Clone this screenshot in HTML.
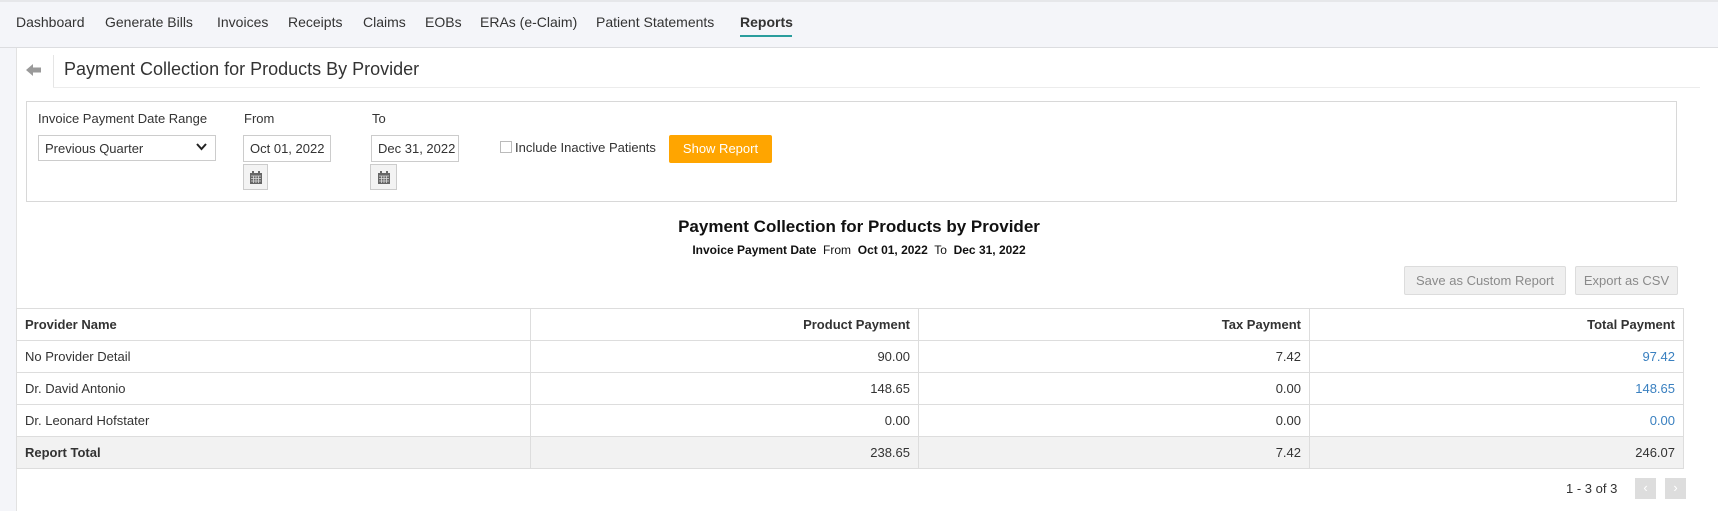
<!DOCTYPE html>
<html><head><meta charset="utf-8"><style>
*{box-sizing:border-box;margin:0;padding:0}
body{width:1718px;height:511px;overflow:hidden;background:#f4f5f9;font-family:"Liberation Sans",Arial,sans-serif;color:#333;position:relative}
.abs{position:absolute}
.nav{left:0;top:0;width:1718px;height:48px;border-top:2px solid #e6e7ea;border-bottom:1px solid #dcdde0;background:#f4f5f9}
.nav span{position:absolute;top:12px;font-size:14px;color:#333}
.panel{left:16px;top:48px;width:1702px;height:463px;background:#fff;border-left:1px solid #e2e2e2}
.inp{border:1px solid #ccc;background:#fff;font-size:13px;color:#333;padding-left:6px;line-height:25px}
.cal{border:1px solid #ccc;background:#f3f3f3}
table{border-collapse:collapse;position:absolute;left:16px;top:308px;width:1668px;font-size:13px}
td{border:1px solid #ddd;height:32px;padding:0 8px;text-align:right}
td:first-child{text-align:left}
tr.h td{font-weight:bold}
tr.t td{background:#f2f2f2}
tr.t td:first-child{font-weight:bold}
.lnk{color:#3a80c0}
.btn{background:#efefef;border:1px solid #dcdcdc;color:#8a8a8a;font-size:13px;text-align:center;line-height:27px;border-radius:2px}
</style></head><body>
<div class="abs nav">
<span style="left:16px">Dashboard</span>
<span style="left:105px">Generate Bills</span>
<span style="left:217px">Invoices</span>
<span style="left:288px">Receipts</span>
<span style="left:363px">Claims</span>
<span style="left:425px">EOBs</span>
<span style="left:480px">ERAs (e-Claim)</span>
<span style="left:596px">Patient Statements</span>
<span style="left:740px;font-weight:bold">Reports</span>
<div class="abs" style="left:740px;top:33px;width:52px;height:2px;background:#2a9d9d"></div>
</div>
<div class="abs panel"></div>
<svg class="abs" style="left:26px;top:63px" width="16" height="14" viewBox="0 0 16 14"><path d="M0 7 L7 1 L7 4.5 L15 4.5 L15 9.5 L7 9.5 L7 13 Z" fill="#9a9a9a"/></svg>
<div class="abs" style="left:53px;top:55px;width:1px;height:33px;background:#e5e5e5"></div>
<div class="abs" style="left:64px;top:59px;font-size:18px;color:#333">Payment Collection for Products By Provider</div>
<div class="abs" style="left:53px;top:87px;width:1647px;height:1px;background:#ececec"></div>
<div class="abs" style="left:26px;top:101px;width:1651px;height:101px;border:1px solid #d8d8d8"></div>
<div class="abs" style="left:38px;top:111px;font-size:13px">Invoice Payment Date Range</div>
<div class="abs" style="left:244px;top:111px;font-size:13px">From</div>
<div class="abs" style="left:372px;top:111px;font-size:13px">To</div>
<div class="abs inp" style="left:38px;top:135px;width:178px;height:26px">Previous Quarter</div>
<svg class="abs" style="left:196px;top:143px" width="11" height="8" viewBox="0 0 11 8"><path d="M1 1 L5.5 6 L10 1" stroke="#222" stroke-width="2" fill="none"/></svg>
<div class="abs inp" style="left:243px;top:135px;width:88px;height:27px">Oct 01, 2022</div>
<div class="abs inp" style="left:371px;top:135px;width:88px;height:27px">Dec 31, 2022</div>
<div class="abs cal" style="left:243px;top:164px;width:25px;height:26px"><svg style="position:absolute;left:6px;top:6px" width="12" height="13" viewBox="0 0 12 13"><rect x="0" y="2" width="12" height="11" fill="#666"/><rect x="2" y="0" width="2" height="3" fill="#666"/><rect x="8" y="0" width="2" height="3" fill="#666"/><path d="M1 5h10M1 7.5h10M1 10h10M3.5 5v7M6 5v7M8.5 5v7" stroke="#ddd" stroke-width=".8"/></svg></div>
<div class="abs cal" style="left:370px;top:164px;width:27px;height:26px"><svg style="position:absolute;left:7px;top:6px" width="12" height="13" viewBox="0 0 12 13"><rect x="0" y="2" width="12" height="11" fill="#666"/><rect x="2" y="0" width="2" height="3" fill="#666"/><rect x="8" y="0" width="2" height="3" fill="#666"/><path d="M1 5h10M1 7.5h10M1 10h10M3.5 5v7M6 5v7M8.5 5v7" stroke="#ddd" stroke-width=".8"/></svg></div>
<div class="abs" style="left:500px;top:141px;width:12px;height:12px;border:1px solid #bbb"></div>
<div class="abs" style="left:515px;top:140px;font-size:13px">Include Inactive Patients</div>
<div class="abs" style="left:669px;top:135px;width:103px;height:28px;background:#ffa500;border-radius:2px;color:#fff;font-size:13px;text-align:center;line-height:28px">Show Report</div>
<div class="abs" style="top:217px;text-align:center;font-size:17px;font-weight:bold;color:#111;left:0;width:1718px">Payment Collection for Products by Provider</div>
<div class="abs" style="left:0;width:1718px;top:243px;text-align:center;font-size:12px;color:#111"><b>Invoice Payment Date</b>&nbsp; From &nbsp;<b>Oct 01, 2022</b>&nbsp; To &nbsp;<b>Dec 31, 2022</b></div>
<div class="abs btn" style="left:1404px;top:266px;width:162px;height:29px">Save as Custom Report</div>
<div class="abs btn" style="left:1575px;top:266px;width:103px;height:29px">Export as CSV</div>
<table>
<colgroup><col style="width:514px"><col style="width:388px"><col style="width:391px"><col></colgroup>
<tr class="h"><td>Provider Name</td><td>Product Payment</td><td>Tax Payment</td><td>Total Payment</td></tr>
<tr><td>No Provider Detail</td><td>90.00</td><td>7.42</td><td class="lnk">97.42</td></tr>
<tr><td>Dr. David Antonio</td><td>148.65</td><td>0.00</td><td class="lnk">148.65</td></tr>
<tr><td>Dr. Leonard Hofstater</td><td>0.00</td><td>0.00</td><td class="lnk">0.00</td></tr>
<tr class="t"><td>Report Total</td><td>238.65</td><td>7.42</td><td>246.07</td></tr>
</table>
<div class="abs" style="left:1566px;top:481px;font-size:13px;color:#333">1 - 3 of 3</div>
<div class="abs" style="left:1635px;top:478px;width:21px;height:21px;background:#ddd;color:#fff;text-align:center;font-size:13px;line-height:20px">&lsaquo;</div>
<div class="abs" style="left:1665px;top:478px;width:21px;height:21px;background:#ddd;color:#fff;text-align:center;font-size:13px;line-height:20px">&rsaquo;</div>
</body></html>
